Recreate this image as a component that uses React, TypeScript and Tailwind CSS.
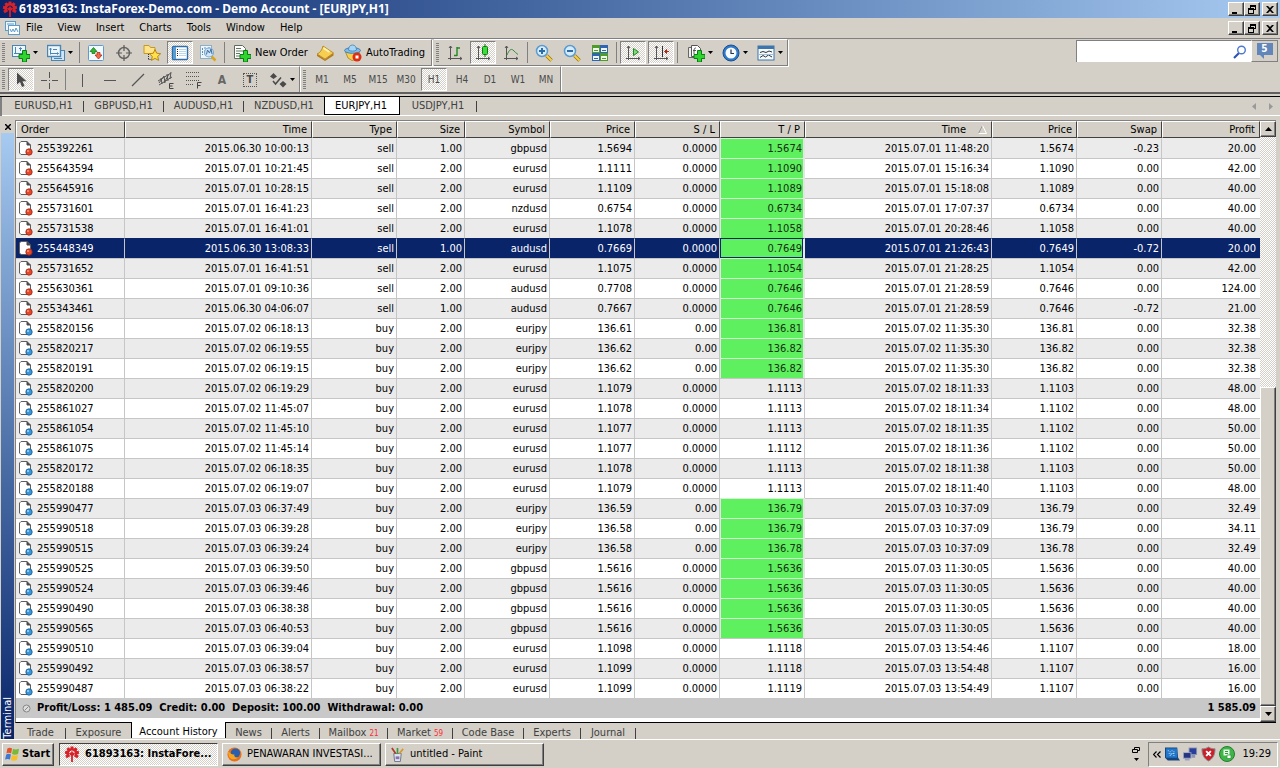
import type { ReactNode } from "react";
import clsx from "clsx";

type Side = "sell" | "buy";

interface Order {
  id: string;
  opened: string;
  side: Side;
  size: string;
  symbol: string;
  price: string;
  sl: string;
  tp: string;
  closed: string;
  closePrice: string;
  swap: string;
  profit: string;
  hit: boolean;
}

// id | open time | side | size | symbol | price | s/l | t/p | close time | close price | swap | profit | t/p hit
const rawOrders = `
255392261|2015.06.30 10:00:13|sell|1.00|gbpusd|1.5694|0.0000|1.5674|2015.07.01 11:48:20|1.5674|-0.23|20.00|1
255643594|2015.07.01 10:21:45|sell|2.00|eurusd|1.1111|0.0000|1.1090|2015.07.01 15:16:34|1.1090|0.00|42.00|1
255645916|2015.07.01 10:28:15|sell|2.00|eurusd|1.1109|0.0000|1.1089|2015.07.01 15:18:08|1.1089|0.00|40.00|1
255731601|2015.07.01 16:41:23|sell|2.00|nzdusd|0.6754|0.0000|0.6734|2015.07.01 17:07:37|0.6734|0.00|40.00|1
255731538|2015.07.01 16:41:01|sell|2.00|eurusd|1.1078|0.0000|1.1058|2015.07.01 20:28:46|1.1058|0.00|40.00|1
255448349|2015.06.30 13:08:33|sell|1.00|audusd|0.7669|0.0000|0.7649|2015.07.01 21:26:43|0.7649|-0.72|20.00|1
255731652|2015.07.01 16:41:51|sell|2.00|eurusd|1.1075|0.0000|1.1054|2015.07.01 21:28:25|1.1054|0.00|42.00|1
255630361|2015.07.01 09:10:36|sell|2.00|audusd|0.7708|0.0000|0.7646|2015.07.01 21:28:59|0.7646|0.00|124.00|1
255343461|2015.06.30 04:06:07|sell|1.00|audusd|0.7667|0.0000|0.7646|2015.07.01 21:28:59|0.7646|-0.72|21.00|1
255820156|2015.07.02 06:18:13|buy|2.00|eurjpy|136.61|0.00|136.81|2015.07.02 11:35:30|136.81|0.00|32.38|1
255820217|2015.07.02 06:19:55|buy|2.00|eurjpy|136.62|0.00|136.82|2015.07.02 11:35:30|136.82|0.00|32.38|1
255820191|2015.07.02 06:19:15|buy|2.00|eurjpy|136.62|0.00|136.82|2015.07.02 11:35:30|136.82|0.00|32.38|1
255820200|2015.07.02 06:19:29|buy|2.00|eurusd|1.1079|0.0000|1.1113|2015.07.02 18:11:33|1.1103|0.00|48.00|0
255861027|2015.07.02 11:45:07|buy|2.00|eurusd|1.1078|0.0000|1.1113|2015.07.02 18:11:34|1.1102|0.00|48.00|0
255861054|2015.07.02 11:45:10|buy|2.00|eurusd|1.1077|0.0000|1.1113|2015.07.02 18:11:35|1.1102|0.00|50.00|0
255861075|2015.07.02 11:45:14|buy|2.00|eurusd|1.1077|0.0000|1.1112|2015.07.02 18:11:36|1.1102|0.00|50.00|0
255820172|2015.07.02 06:18:35|buy|2.00|eurusd|1.1078|0.0000|1.1113|2015.07.02 18:11:38|1.1103|0.00|50.00|0
255820188|2015.07.02 06:19:07|buy|2.00|eurusd|1.1079|0.0000|1.1113|2015.07.02 18:11:40|1.1103|0.00|48.00|0
255990477|2015.07.03 06:37:49|buy|2.00|eurjpy|136.59|0.00|136.79|2015.07.03 10:37:09|136.79|0.00|32.49|1
255990518|2015.07.03 06:39:28|buy|2.00|eurjpy|136.58|0.00|136.79|2015.07.03 10:37:09|136.79|0.00|34.11|1
255990515|2015.07.03 06:39:24|buy|2.00|eurjpy|136.58|0.00|136.78|2015.07.03 10:37:09|136.78|0.00|32.49|1
255990525|2015.07.03 06:39:50|buy|2.00|gbpusd|1.5616|0.0000|1.5636|2015.07.03 11:30:05|1.5636|0.00|40.00|1
255990524|2015.07.03 06:39:46|buy|2.00|gbpusd|1.5616|0.0000|1.5636|2015.07.03 11:30:05|1.5636|0.00|40.00|1
255990490|2015.07.03 06:38:38|buy|2.00|gbpusd|1.5616|0.0000|1.5636|2015.07.03 11:30:05|1.5636|0.00|40.00|1
255990565|2015.07.03 06:40:53|buy|2.00|gbpusd|1.5616|0.0000|1.5636|2015.07.03 11:30:05|1.5636|0.00|40.00|1
255990510|2015.07.03 06:39:04|buy|2.00|eurusd|1.1098|0.0000|1.1118|2015.07.03 13:54:46|1.1107|0.00|18.00|0
255990492|2015.07.03 06:38:57|buy|2.00|eurusd|1.1099|0.0000|1.1118|2015.07.03 13:54:48|1.1107|0.00|16.00|0
255990487|2015.07.03 06:38:22|buy|2.00|eurusd|1.1099|0.0000|1.1119|2015.07.03 13:54:49|1.1107|0.00|16.00|0
`;

const orders: Order[] = rawOrders
  .trim()
  .split("\n")
  .map((line) => {
    const [id, opened, side, size, symbol, price, sl, tp, closed, closePrice, swap, profit, hit] = line.split("|");
    return {
      id, opened, side: side as Side, size, symbol, price, sl, tp, closed, closePrice, swap, profit,
      hit: hit === "1",
    };
  });

const SELECTED_ID = "255448349";

const columns = [
  { label: "Order", width: "w-[109px]" },
  { label: "Time", width: "w-[187px]" },
  { label: "Type", width: "w-[85px]" },
  { label: "Size", width: "w-[68px]" },
  { label: "Symbol", width: "w-[85px]" },
  { label: "Price", width: "w-[85px]" },
  { label: "S / L", width: "w-[85px]" },
  { label: "T / P", width: "w-[85px]" },
  { label: "Time", width: "w-[187px]", sorted: true },
  { label: "Price", width: "w-[85px]" },
  { label: "Swap", width: "w-[85px]" },
  { label: "Profit", width: "w-[98px]" },
];

const chartTabs = ["EURUSD,H1", "GBPUSD,H1", "AUDUSD,H1", "NZDUSD,H1", "EURJPY,H1", "USDJPY,H1"];
const timeframes = ["M1", "M5", "M15", "M30", "H1", "H4", "D1", "W1", "MN"];

const terminalTabs = [
  { label: "Trade", width: "w-[50px]" },
  { label: "Exposure", width: "w-[65px]" },
  { label: "Account History", width: "w-[95px]" },
  { label: "News", width: "w-[46px]" },
  { label: "Alerts", width: "w-[48px]" },
  { label: "Mailbox", width: "w-[68px]", count: 21 },
  { label: "Market", width: "w-[65px]", count: 59 },
  { label: "Code Base", width: "w-[71px]" },
  { label: "Experts", width: "w-[57px]" },
  { label: "Journal", width: "w-[55px]" },
];

const dither = "bg-[repeating-conic-gradient(#ffffff_0_25%,#d4d0c8_0_50%)] bg-[length:2px_2px]";
const raised =
  "border border-t-white border-l-white border-r-[#404040] border-b-[#404040] bg-[#d4d0c8] shadow-[inset_-1px_-1px_0_#808080]";

/* ---------- icons ---------- */

function Svg({ children, size = 18 }: { children: ReactNode; size?: number }) {
  return (
    <svg width={size} height={size} viewBox="0 0 18 18" fill="none" className="shrink-0" aria-hidden>
      {children}
    </svg>
  );
}

const GreenPlus = () => (
  <path d="M10.500 6.500h4v4h3.500v4h-3.500V18h-4v-3.500H7v-4h3.500z" fill="#2fd42f" stroke="#0b7d16" strokeWidth="1" />
);

const NewChartIcon = () => (
  <Svg>
    <rect x=".5" y="1.500" width="13" height="11" fill="#eef7fd" stroke="#4a86b4" />
    <path d="M3.500 3v7M2 9.500h9M7 5l1.500-1.500L10 5M8.500 4v3" stroke="#4a86b4" />
    <GreenPlus />
  </Svg>
);

const ProfilesIcon = () => (
  <Svg>
    <rect x="4.500" y="6.500" width="13" height="10" fill="#cfe5f5" stroke="#4a86b4" />
    <rect x=".5" y="1.500" width="13" height="11" fill="#eef7fd" stroke="#4a86b4" strokeWidth="1.400" />
    <path d="M3.500 4v6.500M3.500 4L2.500 5.500M3.500 4l1 1.500M3 9.500h8.500M11.500 9.500L10 8.500M11.500 9.500l-1.500 1M6 5.500h4M7 14.500h8" stroke="#4a86b4" />
  </Svg>
);

const MarketWatchIcon = () => (
  <Svg>
    <rect x="1.500" y="1.500" width="15" height="15" rx="1" fill="#f3faff" stroke="#5b9bd0" />
    <path d="M3 7.500L6.500 3.500 10 7.500H8v2H5v-2z" fill="#35b135" stroke="#1b7f1b" strokeWidth=".8" />
    <path d="M8 11L11.500 15l3.500-4H13V8.500h-3V11z" fill="#ee6a4a" stroke="#b62a12" strokeWidth=".8" />
  </Svg>
);

const DataWindowIcon = () => (
  <Svg>
    <circle cx="9" cy="9" r="5.500" stroke="#666" strokeWidth="1.500" />
    <path d="M9 1v6M9 11v6M1 9h6M11 9h6" stroke="#5a5a5a" strokeWidth="1.200" />
  </Svg>
);

const NavigatorIcon = () => (
  <Svg>
    <path d="M1 1.500h5l1.500 2H12v6H1z" fill="#ffe38a" stroke="#c79a1e" />
    <path d="M5.500 10v6M5.500 15.500h3" stroke="#333" strokeDasharray="1 1" />
    <path d="M12 5.500l1.700 3.700 4 .5-3 2.700.9 4-3.600-2-3.600 2 .9-4-3-2.700 4-.5z" fill="#ffdf4a" stroke="#b8860b" />
  </Svg>
);

const TerminalIcon = () => (
  <Svg>
    <rect x="1.500" y="2.500" width="15" height="13" rx="1" fill="#fff" stroke="#2f6ea8" strokeWidth="1.400" />
    <path d="M3.500 3v12" stroke="#5a9bd0" strokeWidth="3" />
    <path d="M8 5.500h7M8 7.500h7M8 9.500h7M8 11.500h7" stroke="#b9d8ee" />
    <path d="M6.500 5v8" stroke="#222" strokeDasharray="1 1" />
  </Svg>
);

const TesterIcon = () => (
  <Svg>
    <rect x="1.500" y="1.500" width="11" height="13" fill="#eef6fc" stroke="#8ab0cc" />
    <path d="M3.500 4v7M6 3v5M10 3v3" stroke="#5b8fb8" strokeDasharray="2 1" />
    <path d="M12.500 12.500l4 4" stroke="#d8a51c" strokeWidth="2.500" />
    <circle cx="10" cy="8.500" r="4.500" fill="#cfe6f8" stroke="#7fa9cc" strokeWidth="1.200" />
    <path d="M7.500 10.500L8.500 6l2 3 1.500-4 1 5" stroke="#3f6fa4" />
  </Svg>
);

const NewOrderIcon = () => (
  <Svg>
    <path d="M1.500 1.500h8l3 3v10h-11z" fill="#fff" stroke="#5c6c5c" />
    <path d="M3 4.500h5M3 7h7M3 9.500h4M3 12h4" stroke="#637863" />
    <GreenPlus />
  </Svg>
);

const MetaEditorIcon = () => (
  <Svg>
    <path d="M1 10l8 5.500L17.500 9v2.500L9 17l-8-5z" fill="#b7791a" />
    <path d="M7 2l10.500 7L9 15 1 10c3-1 5-4 6-8z" fill="#f6cf52" stroke="#b07d14" strokeWidth=".8" />
    <path d="M7.500 4l6 4" stroke="#fff2ae" strokeWidth="2" />
  </Svg>
);

const AutoTradingIcon = () => (
  <Svg>
    <path d="M1.500 8h14l-2.500 7-5 1.500L4 14z" fill="#f5d04e" stroke="#b8902a" />
    <ellipse cx="8.500" cy="6.500" rx="8" ry="2.800" fill="#7fbce8" stroke="#3f82b5" />
    <path d="M4.500 6C4.500 3 6 1 8.500 1s4 2 4 5c-2 1.500-6 1.500-8 0z" fill="#a6d5f5" stroke="#3f82b5" strokeWidth=".8" />
    <circle cx="13" cy="13" r="4.500" fill="#dc2e12" />
    <rect x="11.500" y="11.500" width="3" height="3" fill="#fff" />
  </Svg>
);

const Axes = () => <path d="M4.500 2v14M2 14.500h14M3 4l1.500-2L6 4M14 13l2 1.500L14 16" stroke="#555" />;

const BarChartIcon = () => (
  <Svg>
    <Axes />
    <path d="M11 3v9M11 4h3M8 11.500h3" stroke="#1f8a1f" strokeWidth="1.400" />
  </Svg>
);

const CandlesIcon = () => (
  <Svg>
    <Axes />
    <path d="M11 0v13" stroke="#0c6b0c" />
    <rect x="8.500" y="2.500" width="5" height="8" rx="1" fill="#3ddc3d" stroke="#0c7d0c" />
  </Svg>
);

const LineChartIcon = () => (
  <Svg>
    <Axes />
    <path d="M5 11C7 6 9 4.500 11 6s3 3.500 5 4.500" stroke="#3a8a3a" />
  </Svg>
);

function ZoomIcon({ plus = false }: { plus?: boolean }) {
  return (
    <Svg>
      <path d="M11.500 11.500l5 5" stroke="#9a7410" strokeWidth="3.500" />
      <path d="M11.500 11.500l5 5" stroke="#f5d04a" strokeWidth="2" />
      <circle cx="7" cy="7" r="5.500" fill="#d6ecfb" stroke="#5a9bd0" strokeWidth="1.500" />
      <path d={plus ? "M4 7h6M7 4v6" : "M4 7h6"} stroke="#2e6da4" strokeWidth="2" />
    </Svg>
  );
}

const tiles = [
  { x: 1, y: 1, color: "#4e9a2a" },
  { x: 9, y: 1, color: "#2f66b4" },
  { x: 1, y: 9, color: "#2f66b4" },
  { x: 9, y: 9, color: "#4e9a2a" },
];

const TileIcon = () => (
  <Svg>
    {tiles.map(({ x, y, color }) => (
      <g key={`${x}-${y}`}>
        <rect x={x} y={y} width="8" height="8" fill={color} />
        <rect x={x + 1} y={y + 3} width="6" height="4" fill="#eef6ee" />
        <path d={`M${x + 2} ${y + 5.5}h4`} stroke={color} />
      </g>
    ))}
  </Svg>
);

const AutoScrollIcon = () => (
  <Svg>
    <Axes />
    <path d="M9.500 4.500v7l5-3.500z" fill="#7fdc7f" stroke="#1c8a1c" />
  </Svg>
);

const ChartShiftIcon = () => (
  <Svg>
    <Axes />
    <path d="M10.500 2v11" stroke="#333" />
    <path d="M17 7.500h-4M14.500 5.500L12.500 7.500l2 2z" stroke="#b02a1a" fill="#b02a1a" />
  </Svg>
);

const IndicatorsIcon = () => (
  <Svg>
    <path d="M1.500 3.500h8v10h-8z" fill="#eee" stroke="#666" />
    <path d="M4.500 1.500h6l3 3v8h-9z" fill="#fff" stroke="#555" />
    <path d="M9 4c-2 0-2 1-2 6M6 6.500h3" stroke="#555" />
    <GreenPlus />
  </Svg>
);

const ClockIcon = () => (
  <Svg>
    <circle cx="9" cy="9" r="8" fill="#2f79c8" stroke="#1b4f90" />
    <circle cx="9" cy="9" r="5.500" fill="#f4faff" />
    <path d="M9 5.500V9.500h3" stroke="#234" strokeWidth="1.200" />
  </Svg>
);

const TemplateIcon = () => (
  <Svg>
    <rect x="1" y="2" width="16" height="14" fill="#f4faff" stroke="#3d76aa" />
    <path d="M1 3.500h16" stroke="#3d76aa" strokeWidth="3" />
    <path d="M3 8.500l3-1 3 1 3-1.500 3 1M3 13.500l3-2 2.500 1.500 3-2L15 13" stroke="#333" />
    <path d="M2 10.500h14" stroke="#9fc2de" />
  </Svg>
);

const CursorIcon = () => (
  <Svg>
    <path d="M5 1.500v12l3-2.500 2 5 2.500-1-2-4.800h4z" fill="#4a4a4a" />
  </Svg>
);

const CrosshairIcon = () => (
  <Svg>
    <path d="M9.500 1v6M9.500 12v6M1 9.500h6M12 9.500h6M9 9.500h1" stroke="#555" />
  </Svg>
);

const ChannelIcon = () => (
  <Svg>
    <path d="M1 10L14 2M2 14L15 6M4 7l1 6M7 5l1 7M10 3l1 7M14 1l-1 7M2 12L7 5M7 12l5-9" stroke="#555" />
    <path d="M16.500 12.500h-4v5h4M12.500 15h3" stroke="#444" />
  </Svg>
);

const FiboIcon = () => (
  <Svg>
    <path d="M1 1.500h13M1 5.500h13M1 9.500h13M1 13.500h8" stroke="#555" strokeDasharray="1 1" />
    <path d="M16.500 11.500h-4v6M12.500 14.500h3" stroke="#444" />
  </Svg>
);

const ArrowsIcon = () => (
  <Svg>
    <path d="M4.500 2L8 5.500 4.500 8 1 5.500zM14 10l3.500 3L14 16.500 10.500 13z" fill="#4a4a4a" />
    <path d="M4 10l2.500 3L12 6.500" stroke="#4a4a4a" strokeWidth="1.500" />
  </Svg>
);

const Caret = () => (
  <svg width="5" height="3" viewBox="0 0 5 3" className="shrink-0" aria-hidden>
    <path d="M0 0h5L2.500 3z" fill="#000" />
  </svg>
);

function BrandIcon() {
  return (
    <svg width="16" height="16" viewBox="0 0 16 16" className="shrink-0" fill="none" aria-hidden>
      <g stroke="#d8222a" strokeWidth="2.200">
        {[-120, -80, -40, 0, 40, 80, 120].map((angle) => (
          <path key={angle} d="M8 4.500V.5" transform={`rotate(${angle} 8 7.500)`} strokeWidth="3" />
        ))}
        <path d="M3.800 9.500a4.600 4.600 0 1 1 8.400 0" />
        <path d="M8 5.500V16M5.500 7L8 9.500 10.500 7" strokeWidth="1.800" />
      </g>
    </svg>
  );
}

const ChartWindowIcon = () => (
  <svg width="15" height="14" viewBox="0 0 15 14" fill="none" aria-hidden>
    <rect x=".5" y=".5" width="10" height="9" fill="#eaf6fd" stroke="#5c9cc8" />
    <rect x="3.500" y="4.500" width="11" height="9" fill="#fff" stroke="#5c9cc8" />
    <path d="M5 8l1.500 3L8 8l1.500 3L11 7l2 4M2 3h7" stroke="#5c9cc8" />
  </svg>
);

function OrderIcon({ side }: { side: Side }) {
  const sell = side === "sell";
  return (
    <svg width="14" height="15" viewBox="0 0 14 15" fill="none" className="shrink-0" aria-hidden>
      <path d="M2 .5h6L11.500 4v9.500H2L.5 12V2z" fill="#fff" stroke="#5f5f5f" />
      <path d="M8 .5V4h3.500" fill="#4a4a4a" stroke="#4a4a4a" />
      <circle cx="10" cy="11" r="3.200" fill={sell ? "#e4482a" : "#3b96d8"} stroke={sell ? "#9c2410" : "#14598f"} strokeWidth=".8" />
      <circle cx="9" cy="10" r="1" fill={sell ? "#f59a84" : "#a5d6f7"} />
    </svg>
  );
}

/* ---------- window chrome ---------- */

const glyphs: Record<string, string> = {
  Minimize: "M2 8h5v2H2z",
  Restore: "M4 1h6v5H8V5h1V3H5v1H4zM2 4h6v6H2zM3 6v3h4V6z",
  Close: "M2 2h2l2 2 2-2h2L7 5.500 10 9H8L6 7 4 9H2l3-3.500z",
};

function WindowButtons() {
  return (
    <div className="mr-[2px] flex">
      {Object.entries(glyphs).map(([name, d]) => (
        <button
          key={name}
          aria-label={name}
          className={clsx("flex h-[14px] w-4 items-center justify-center", raised, name === "Close" && "ml-[2px]")}
        >
          <svg width="12" height="11" viewBox="0 0 12 11" aria-hidden>
            <path d={d} fill="#000" fillRule="evenodd" />
          </svg>
        </button>
      ))}
    </div>
  );
}

function ToolButton({
  label,
  pressed = false,
  menu = false,
  children,
}: {
  label: string;
  pressed?: boolean;
  menu?: boolean;
  children: ReactNode;
}) {
  return (
    <button
      aria-label={label}
      title={label}
      aria-pressed={pressed}
      className={clsx(
        "flex items-center justify-center text-[#4a4a4a]",
        menu ? "w-[35px] gap-[3px]" : "w-7",
        pressed ? "h-[23px]" : "h-6",
      )}
    >
      {pressed ? (
        <span
          className={clsx(
            "flex h-full w-[26px] items-center justify-center border border-t-[#808080] border-l-[#808080] border-r-white border-b-white",
            dither,
          )}
        >
          {children}
        </span>
      ) : (
        children
      )}
      {menu && <Caret />}
    </button>
  );
}

const Grip = () => (
  <span className="mx-[2px] h-5 w-[3px] bg-[repeating-linear-gradient(#808080_0_1px,#d4d0c8_1px_2px)]" />
);

const Separator = () => <span className="mx-[2px] h-[21px] w-px bg-[#808080]" />;

const toolbar = "flex items-center border-t border-r border-t-white border-r-[#808080]";
const ruled = "border-b border-b-[#808080] shadow-[1px_1px_0_#fff]";

function StandardToolbar() {
  return (
    <div className="flex h-[27px]">
      <div className={clsx(toolbar, ruled)}>
        <Grip />
        <ToolButton label="New Chart" menu><NewChartIcon /></ToolButton>
        <ToolButton label="Profiles" menu><ProfilesIcon /></ToolButton>
        <Separator />
        <ToolButton label="Market Watch"><MarketWatchIcon /></ToolButton>
        <ToolButton label="Data Window"><DataWindowIcon /></ToolButton>
        <ToolButton label="Navigator"><NavigatorIcon /></ToolButton>
        <ToolButton label="Terminal" pressed><TerminalIcon /></ToolButton>
        <ToolButton label="Strategy Tester"><TesterIcon /></ToolButton>
        <Separator />
        <button className="flex w-[84px] items-center gap-1 pl-[6px] whitespace-nowrap">
          <NewOrderIcon />
          New Order
        </button>
        <ToolButton label="MetaEditor"><MetaEditorIcon /></ToolButton>
        <button className="flex w-[92px] items-center gap-1 pl-[5px] whitespace-nowrap">
          <AutoTradingIcon />
          AutoTrading
        </button>
      </div>
      <div className={clsx("ml-[2px]", toolbar, ruled)}>
        <Grip />
        <ToolButton label="Bar Chart"><BarChartIcon /></ToolButton>
        <ToolButton label="Candlesticks" pressed><CandlesIcon /></ToolButton>
        <ToolButton label="Line Chart"><LineChartIcon /></ToolButton>
        <Separator />
        <ToolButton label="Zoom In"><ZoomIcon plus /></ToolButton>
        <ToolButton label="Zoom Out"><ZoomIcon /></ToolButton>
        <ToolButton label="Tile Windows"><TileIcon /></ToolButton>
        <Separator />
        <ToolButton label="Auto Scroll" pressed><AutoScrollIcon /></ToolButton>
        <ToolButton label="Chart Shift" pressed><ChartShiftIcon /></ToolButton>
        <Separator />
        <div className="flex pl-[2px]">
          <ToolButton label="Indicators" menu><IndicatorsIcon /></ToolButton>
          <ToolButton label="Periods" menu><ClockIcon /></ToolButton>
          <ToolButton label="Templates" menu><TemplateIcon /></ToolButton>
        </div>
      </div>
    </div>
  );
}

function DrawingToolbar() {
  return (
    <div className="flex h-[26px]">
      <div className={toolbar}>
        <Grip />
        <ToolButton label="Cursor" pressed><CursorIcon /></ToolButton>
        <ToolButton label="Crosshair"><CrosshairIcon /></ToolButton>
        <Separator />
        <ToolButton label="Vertical Line">
          <Svg><path d="M9.500 3v13" stroke="#555" /></Svg>
        </ToolButton>
        <ToolButton label="Horizontal Line">
          <Svg><path d="M3 9.500h12" stroke="#555" /></Svg>
        </ToolButton>
        <ToolButton label="Trendline">
          <Svg><path d="M3 15L15 3" stroke="#555" strokeWidth="1.200" /></Svg>
        </ToolButton>
        <ToolButton label="Equidistant Channel"><ChannelIcon /></ToolButton>
        <ToolButton label="Fibonacci Retracement"><FiboIcon /></ToolButton>
        <ToolButton label="Text"><span className="text-xs font-bold text-[#666]">A</span></ToolButton>
        <ToolButton label="Text Label">
          <span className="flex size-[14px] items-center justify-center border border-dotted border-[#555] text-[11px] font-bold">
            T
          </span>
        </ToolButton>
        <ToolButton label="Arrows" menu><ArrowsIcon /></ToolButton>
      </div>
      <div className={clsx("border-l border-l-white", toolbar)}>
        <Grip />
        {timeframes.map((tf) => (
          <ToolButton key={tf} label={tf} pressed={tf === "H1"}>
            <span className="text-[10px]">{tf}</span>
          </ToolButton>
        ))}
      </div>
      <div className="border-l border-white" />
    </div>
  );
}

function SearchBox() {
  return (
    <div className="mt-px mr-[2px] flex h-[22px]">
      <label className="flex w-[175px] items-center border-t border-l border-[#808080] bg-white pr-1">
        <input aria-label="Search" className="min-w-0 flex-1 bg-transparent px-1 outline-none" />
        <svg width="14" height="14" viewBox="0 0 14 14" fill="none" aria-hidden>
          <path d="M1 13l5-5" stroke="#2c54b4" strokeWidth="2.200" />
          <circle cx="8.500" cy="5" r="3.800" fill="#fff" stroke="#4e78cc" strokeWidth="1.400" />
        </svg>
      </label>
      <button
        aria-label="5 messages"
        className="flex w-[27px] items-center justify-center border border-t-[#808080] border-l-white border-r-[#808080] border-b-[#808080]"
      >
        <span className="relative -mt-1 h-3 w-4 bg-[#6285ba] text-[10px] leading-3 font-bold text-white">
          5
          <span className="absolute top-3 left-[3px] border-t-4 border-l-4 border-t-[#6285ba] border-l-transparent" />
        </span>
      </button>
    </div>
  );
}

function ChartTabs() {
  return (
    <nav className="flex h-5 items-start border-t border-b border-t-black border-b-white">
      <div className="flex h-[19px] flex-1 border-l-2 border-[#808080] pl-[2px] text-[#404040]">
        {chartTabs.map((tab) => {
          const active = tab === "EURJPY,H1";
          return (
            <button
              key={tab}
              className={clsx(
                "flex items-start pt-[2px]",
                active ? "h-[18px] w-[76px] border-x border-b border-black bg-white pr-[2px] text-black" : "w-20",
                tab === "USDJPY,H1" && "w-[77px]",
              )}
            >
              <span className="flex-1 text-center">{tab}</span>
              {!active && tab !== "NZDUSD,H1" && <span className="mt-[2px] h-[11px] w-px bg-[#404040]" />}
            </button>
          );
        })}
      </div>
      <div className="mt-[6px] mr-[7px] flex gap-[13px]">
        <button aria-label="Scroll tabs left">
          <svg width="4" height="7" viewBox="0 0 4 7" aria-hidden><path d="M4 0v7L0 3.500z" fill="#999" /></svg>
        </button>
        <button aria-label="Scroll tabs right">
          <svg width="4" height="7" viewBox="0 0 4 7" aria-hidden><path d="M0 0v7l4-3.500z" fill="#999" /></svg>
        </button>
      </div>
    </nav>
  );
}

/* ---------- terminal panel ---------- */

function HistoryTable() {
  return (
    <table className="w-full table-fixed border-separate border-spacing-0">
      <colgroup>
        {columns.map((col, i) => (
          <col key={i} className={col.width} />
        ))}
      </colgroup>
      <thead>
        <tr>
          {columns.map((col, i) => (
            <th
              key={i}
              scope="col"
              className={clsx(
                "h-[17px] border border-t-white border-l-white border-r-[#404040] border-b-[#404040] bg-[#d4d0c8] p-0 leading-[15px] font-normal",
                i === 0 ? "pl-1 text-left" : "pr-1 text-right",
              )}
            >
              {col.sorted ? (
                <span className="flex items-center justify-end gap-3">
                  {col.label}
                  <svg width="9" height="9" viewBox="0 0 9 9" fill="none" aria-hidden>
                    <path d="M.5 8.500L4.500.5" stroke="#999" />
                    <path d="M4.500.5l4 8h-8" stroke="#fff" />
                  </svg>
                </span>
              ) : (
                col.label
              )}
            </th>
          ))}
        </tr>
      </thead>
      <tbody>
        {orders.map((order, row) => {
          const selected = order.id === SELECTED_ID;
          const line = clsx(
            "border-t",
            selected ? "border-t-[#0a246a]" : row === 0 ? "border-t-[#ebebeb]" : "border-t-[#c6c6c6]",
          );
          const cell = clsx("h-5 border-r border-r-[#c6c6c6] p-0 pr-[2px] text-right leading-[19px]", line);
          return (
            <tr
              key={order.id}
              aria-selected={selected}
              className={clsx(selected ? "bg-[#0a246a] text-white" : row % 2 === 0 ? "bg-[#ebebeb]" : "bg-white")}
            >
              <td className={clsx("h-5 border-r border-r-[#c6c6c6] p-0 pl-[3px] leading-[19px]", line)}>
                <span className="flex items-center gap-1">
                  <OrderIcon side={order.side} />
                  {order.id}
                </span>
              </td>
              <td className={cell}>{order.opened}</td>
              <td className={cell}>{order.side}</td>
              <td className={cell}>{order.size}</td>
              <td className={cell}>{order.symbol}</td>
              <td className={cell}>{order.price}</td>
              <td className={cell}>{order.sl}</td>
              {order.hit ? (
                <td
                  className={clsx(
                    "h-5 border-t border-r-2 border-l bg-[#5ff05f] p-0 pr-px text-right leading-[19px] text-[#103010]",
                    selected
                      ? "border-t-[#0a246a] border-r-[#e8e8e8] border-l-[#0a246a] shadow-[inset_-1px_-1px_0_#0a246a]"
                      : "border-t-[#d5f2d5] border-r-[#e4e4e4] border-l-[#e4e4e4]",
                  )}
                >
                  {order.tp}
                </td>
              ) : (
                <td className={cell}>{order.tp}</td>
              )}
              <td className={cell}>{order.closed}</td>
              <td className={cell}>{order.closePrice}</td>
              <td className={cell}>{order.swap}</td>
              <td className={clsx("h-5 p-0 pr-1 text-right leading-[19px]", line)}>{order.profit}</td>
            </tr>
          );
        })}
      </tbody>
    </table>
  );
}

function Summary() {
  return (
    <div className="flex h-5 items-center bg-[#c8c8c8] pr-1 pl-[6px] font-bold">
      <svg width="9" height="9" viewBox="0 0 9 9" fill="none" aria-hidden>
        <circle cx="4.500" cy="4.500" r="3.500" fill="#ddd" stroke="#888" />
        <path d="M2.500 6.500l4-4" stroke="#888" />
      </svg>
      <span className="ml-[6px] flex-1 whitespace-pre">
        {"Profit/Loss: 1 485.09  Credit: 0.00  Deposit: 100.00  Withdrawal: 0.00"}
      </span>
      <span>1 585.09</span>
    </div>
  );
}

function ScrollBar() {
  return (
    <div className="flex w-4 flex-col">
      <button aria-label="Scroll up" className={clsx("flex h-4 items-center justify-center", raised)}>
        <svg width="7" height="4" viewBox="0 0 7 4" aria-hidden><path d="M0 4h7L3.500 0z" fill="#000" /></svg>
      </button>
      <div className={clsx("flex flex-1 flex-col justify-end", dither)}>
        <div className={clsx("h-[56%]", raised)} />
      </div>
      <button aria-label="Scroll down" className={clsx("flex h-4 items-center justify-center", raised)}>
        <svg width="7" height="4" viewBox="0 0 7 4" aria-hidden><path d="M0 0h7L3.500 4z" fill="#000" /></svg>
      </button>
    </div>
  );
}

function TerminalTabs() {
  return (
    <nav className="flex h-[15px] pl-px text-[#404040]">
      {terminalTabs.map((tab, i) => {
        const active = tab.label === "Account History";
        return (
          <button
            key={tab.label}
            className={clsx(
              "flex shrink-0 items-center whitespace-nowrap",
              tab.width,
              active ? "-mt-px h-4 border-x border-black bg-white pt-[3px] text-black" : "pt-[5px]",
            )}
          >
            <span className="flex-1 text-center">
              {tab.label}
              {tab.count && <span className="ml-[3px] text-[8px] text-red-500">{tab.count}</span>}
            </span>
            {!active && i !== 1 && <span className="h-[11px] w-px bg-[#404040]" />}
          </button>
        );
      })}
    </nav>
  );
}

function TerminalPanel() {
  return (
    <section className="flex flex-1 pt-1">
      <div className="flex w-[15px] flex-col items-start">
        <button aria-label="Close terminal" className="flex h-[13px] w-full items-center justify-center">
          <svg width="6" height="6" viewBox="0 0 6 6" aria-hidden>
            <path d="M0 0l6 6M6 0L0 6" stroke="#000" strokeWidth="1.500" />
          </svg>
        </button>
        <div className="ml-px flex w-[13px] flex-1 flex-col justify-end bg-linear-to-b from-[#a6caf0] to-[#0a246a]">
          <span className="rotate-180 leading-[13px] text-white [writing-mode:vertical-rl]">Terminal</span>
        </div>
      </div>
      <div className="flex min-w-0 flex-1 flex-col">
        <div className="mr-1 flex border-t border-b border-l border-t-[#808080] border-b-black border-l-[#808080] bg-white">
          <div className="min-w-0 flex-1 pb-1">
            <HistoryTable />
            <Summary />
          </div>
          <ScrollBar />
        </div>
        <TerminalTabs />
      </div>
    </section>
  );
}

/* ---------- taskbar ---------- */

const FirefoxIcon = () => (
  <svg width="15" height="15" viewBox="0 0 16 16" className="shrink-0" aria-hidden>
    <circle cx="8" cy="8" r="7.500" fill="#e8701a" />
    <circle cx="9" cy="6.500" r="5" fill="#2a5fae" />
    <path d="M1 5c1 0 2 1 3 2s2 1 4 1c-1 2 1 4 4 3-2 3-8 3-10-1z" fill="#f7a521" />
  </svg>
);

const PaintIcon = () => (
  <svg width="15" height="15" viewBox="0 0 16 16" fill="none" className="shrink-0" aria-hidden>
    <path d="M4 7h8l-1 8.500H5z" fill="#dfe6ee" stroke="#6a7488" />
    <path d="M6 7L2 1" stroke="#b03a2a" strokeWidth="1.800" />
    <path d="M8 7V1" stroke="#3f9a3f" strokeWidth="1.800" />
    <path d="M10 7l4-5" stroke="#d8982a" strokeWidth="1.800" />
    <path d="M6 10h4v3H6z" fill="#8b6fb0" />
  </svg>
);

const StartFlag = () => (
  <svg width="15" height="14" viewBox="0 0 16 15" className="shrink-0" aria-hidden>
    <path d="M2.500 1.500C4 .5 6 .5 7.500 1.500L6.500 7C5 6 3 6 1.500 7z" fill="#e5532a" />
    <path d="M8.500 2c1.500 1 4 1 6.500 0l-1 5.500c-2 1-5 1-6.500 0z" fill="#7ab837" />
    <path d="M1.300 8C3 7 5 7 6.300 8l-1 5.500c-1.500-1-3.500-1-5.300 0z" fill="#3f79d4" />
    <path d="M7.300 8.500c1.500 1 4.500 1 6.500 0l-1 5.500c-2 1-5 1-6.500 0z" fill="#f6bf2a" />
  </svg>
);

function Tray() {
  return (
    <div className="mr-[2px] flex h-[25px] items-center gap-[3px] border border-t-[#808080] border-l-[#808080] border-r-white border-b-white pr-[6px] pl-1">
      <button aria-label="Show hidden icons" className="w-[9px]">
        <svg width="8" height="7" viewBox="0 0 8 7" fill="none" aria-hidden>
          <path d="M3.500.5l-3 3 3 3M7.500.5l-3 3 3 3" stroke="#000" strokeWidth="1.200" />
        </svg>
      </button>
      <svg width="15" height="16" viewBox="0 0 16 16" aria-hidden>
        <path d="M0 1h13l1 11 2 3H3l-3-3z" fill="#16447f" />
        <path d="M1 2h12v10H1z" fill="#2377c8" />
        <path d="M3 4h1v1H3zM5 5h1v1H5zM7 4h1v1H7zM9 5h1v1H9zM4 7h1v1H4zM6 7h1v2H6zM8 7h2v1H8zM5 9h1v1H5zM9 9h1v1H9z" fill="#b5dcff" />
      </svg>
      <svg width="15" height="16" viewBox="0 0 16 16" aria-hidden>
        <path d="M6 1h9v8H6zM9 9h4v3H9z" fill="#8b93b4" />
        <path d="M7 2h7v6H7z" fill="#2a3f9a" />
        <path d="M0 6h9v7H0zM2 13h5v2H2z" fill="#9aa2bf" />
        <path d="M1 7h7v5H1z" fill="#25357f" />
      </svg>
      <svg width="15" height="16" viewBox="0 0 16 16" fill="none" aria-hidden>
        <path d="M8 .5c2 1.500 4.500 2 7 2 0 6-2 10.500-7 13-5-2.500-7-7-7-13 2.500 0 5-.5 7-2z" fill="#c9202c" stroke="#8a8a8a" />
        <path d="M5.500 5l5 5M10.500 5l-5 5" stroke="#fff" strokeWidth="2" />
      </svg>
      <svg width="16" height="16" viewBox="0 0 16 16" fill="none" aria-hidden>
        <circle cx="8" cy="8" r="7.500" fill="#3fb44a" stroke="#1f7f2a" />
        <path d="M4.500 3.500h6v6h-6z" fill="#eaffea" />
        <path d="M6 5.500h3M6 7.500h3" stroke="#2f9a3a" />
        <path d="M8 9h4v3.500H8z" fill="#fff" stroke="#2f9a3a" strokeWidth=".8" />
      </svg>
      <time className="ml-1">19:29</time>
    </div>
  );
}

function Taskbar() {
  const task = "flex h-[23px] w-[159px] items-center gap-[5px] pl-1 whitespace-nowrap";
  return (
    <footer className="flex h-[29px] items-center border-t border-white">
      <button className={clsx("ml-[2px] flex h-[23px] w-[52px] items-center gap-[2px] pl-[2px] font-bold", raised)}>
        <StartFlag />
        Start
      </button>
      <div className="ml-[5px] flex flex-1 gap-1">
        <button
          className={clsx(
            task,
            dither,
            "border border-t-[#404040] border-l-[#404040] border-r-white border-b-white font-bold",
          )}
        >
          <BrandIcon />
          61893163: InstaFore...
        </button>
        <button className={clsx(task, raised)}>
          <FirefoxIcon />
          PENAWARAN INVESTASI...
        </button>
        <button className={clsx(task, raised)}>
          <PaintIcon />
          untitled - Paint
        </button>
      </div>
      <button aria-label="Window options" className="mr-2 flex flex-col items-center gap-[5px]">
        <svg width="8" height="6" viewBox="0 0 8 6" fill="none" aria-hidden>
          <path d="M2.500 2.500v-2h5v3h-2M.5 2.500h5v3h-5z" stroke="#000" />
        </svg>
        <Caret />
      </button>
      <Tray />
    </footer>
  );
}

export default function App() {
  return (
    <div className="flex min-h-screen flex-col overflow-hidden bg-[#d4d0c8] font-['DejaVu_Sans_Condensed','DejaVu_Sans',sans-serif] text-[11px] leading-[14px] text-black">
      <header className="flex h-[18px] items-center bg-linear-to-r from-[#0a246a] to-[#a6caf0] pl-[2px]">
        <BrandIcon />
        <h1 className="ml-px flex-1 font-['Noto_Sans','DejaVu_Sans_Condensed',sans-serif] text-[12px] font-bold text-white">
          61893163: InstaForex-Demo.com - Demo Account - [EURJPY,H1]
        </h1>
        <WindowButtons />
      </header>

      <div className="flex h-[21px] items-center border-b border-[#808080] pl-[5px]">
        <ChartWindowIcon />
        <nav className="ml-[6px] flex flex-1 gap-[15px]">
          {["File", "View", "Insert", "Charts", "Tools", "Window", "Help"].map((item) => (
            <button key={item}>{item}</button>
          ))}
        </nav>
        <WindowButtons />
      </div>

      <div className="flex border-b-2 border-[#606060]">
        <div className="flex-1">
          <StandardToolbar />
          <DrawingToolbar />
        </div>
        <SearchBox />
      </div>

      <div className="pt-[2px]">
        <ChartTabs />
      </div>
      <TerminalPanel />
      <Taskbar />
    </div>
  );
}
